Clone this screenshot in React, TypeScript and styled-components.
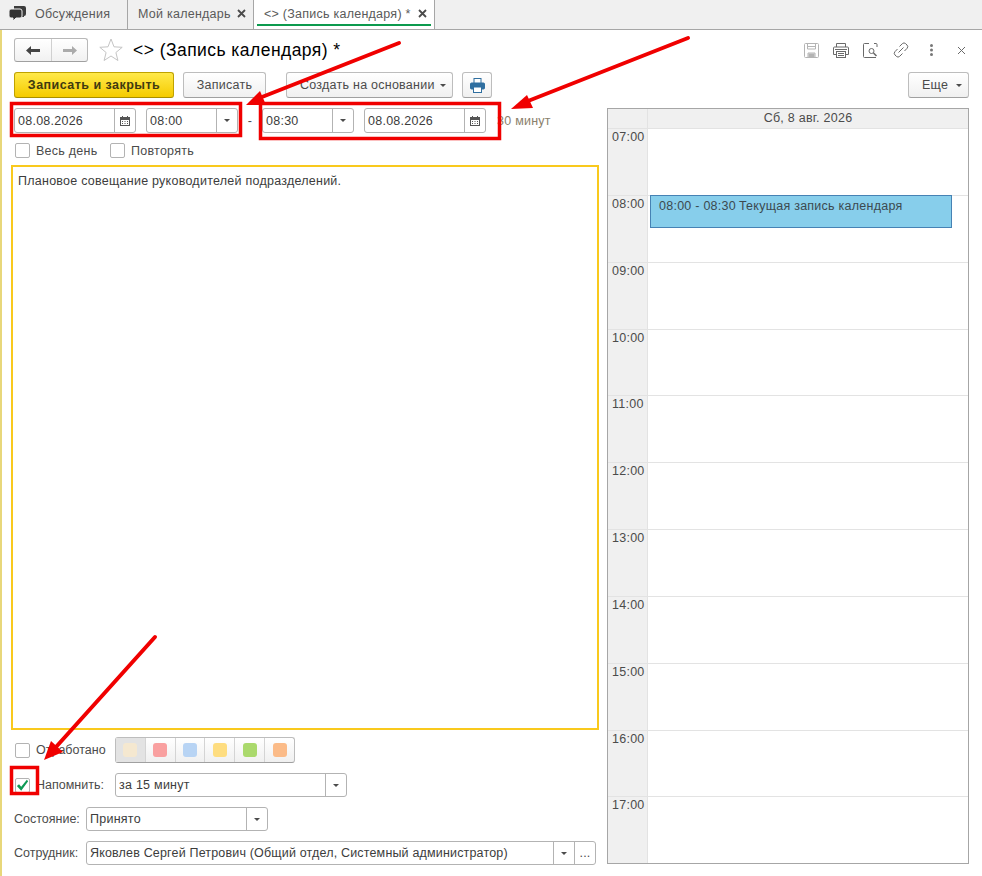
import React from 'react';
import styled, { createGlobalStyle, css } from 'styled-components';

const GlobalStyle = createGlobalStyle`
    html, body {
        margin: 0;
        padding: 0;
        background: #FFFFFF;
    }

    * {
        box-sizing: border-box;
    }
`

const Page = styled.div`
    position: relative;
    display: flex;
    flex-direction: column;
    width: 982px;
    height: 876px;
    overflow: hidden;
    font-family: "Liberation Sans", Arial, sans-serif;
    font-size: 12.5px;
    letter-spacing: 0.25px;
    color: #4B4B4B;
`

// Tabs
const TabBar = styled.nav`
    display: flex;
    flex: none;
    height: 30px;
    background-color: #F0F0F0;
    border-bottom: 1px solid #A6A6A6;
`

const Tab = styled.div<{ $width: number; $active?: boolean }>`
    position: relative;
    display: flex;
    align-items: center;
    flex: none;
    width: ${(p) => p.$width}px;
    height: 29px;
    padding: 0 0 2px 10px;
    border-right: 1px solid #A6A6A6;
    color: #5A5A5A;
    background-color: ${(p) => (p.$active ? '#FFFFFF' : 'transparent')};

    ${(p) => p.$active && css`
        &::after {
            content: '';
            position: absolute;
            left: 3px;
            right: 3px;
            bottom: 3px;
            height: 2px;
            background-color: #0C9A4E;
        }
    `}
`

const TabIcon = styled.svg`
    flex: none;
    margin: 0 9px 0 -1px;
`

const TabClose = styled.span`
    margin-left: auto;
    margin-right: 7px;
    display: flex;
`

// Form
const Form = styled.main`
    display: flex;
    flex-direction: column;
    flex: 1;
    min-height: 0;
    padding: 8px 13px 0 12px;
    border-left: 2px solid #E8D77A;
`

const HeaderRow = styled.header`
    display: flex;
    align-items: center;
    height: 24px;
`

const NavGroup = styled.div`
    display: flex;
    width: 74px;
    height: 24px;
    border: 1px solid #B8B8B8;
    border-bottom-color: #A0A0A0;
    border-radius: 3px;
    background: linear-gradient(#FFFFFF, #F1F1F1);
`

const NavButton = styled.div<{ $last?: boolean }>`
    display: flex;
    align-items: center;
    justify-content: center;
    width: 50%;
    border-left: ${(p) => (p.$last ? '1px solid #D0D0D0' : 'none')};
`

const FavoriteIcon = styled.svg`
    flex: none;
    margin-left: 11px;
`

const Title = styled.h1`
    margin: 0 0 0 10px;
    font-size: 17.5px;
    font-weight: 400;
    letter-spacing: 0.45px;
    color: #000000;
`

const HeaderIcons = styled.div`
    display: flex;
    align-items: center;
    margin-left: auto;
    gap: 14px;
`

const IconSlot = styled.span`
    display: flex;
    justify-content: center;
    width: 16px;
`

const Toolbar = styled.div`
    display: flex;
    align-items: center;
    height: 26px;
    margin-top: 10px;
`

const Button = styled.div<{ $width: number; $primary?: boolean; $gap?: number; $push?: boolean; $caret?: boolean }>`
    display: flex;
    align-items: center;
    justify-content: ${(p) => (p.$caret ? 'space-between' : 'center')};
    flex: none;
    width: ${(p) => p.$width}px;
    height: 26px;
    padding: ${(p) => (p.$caret ? '0 6px 0 13px' : '0')};
    margin-left: ${(p) => (p.$push ? 'auto' : `${p.$gap || 0}px`)};
    border: 1px solid ${(p) => (p.$primary ? '#BFA200' : '#BDBDBD')};
    border-bottom-color: ${(p) => (p.$primary ? '#A88F00' : '#A0A0A0')};
    border-radius: 3px;
    color: ${(p) => (p.$primary ? '#3F3A10' : '#4B4B4B')};
    font-weight: ${(p) => (p.$primary ? 700 : 400)};
    letter-spacing: ${(p) => (p.$primary ? '0.47px' : '0.25px')};
    background: ${(p) => (p.$primary ? 'linear-gradient(#FFE94A, #F5CB00)' : 'linear-gradient(#FFFFFF, #F0F0F0)')};
`

const Caret = styled.span`
    width: 0;
    height: 0;
    border-left: 3px solid transparent;
    border-right: 3px solid transparent;
    border-top: 3px solid #4B4B4B;
`

const Body = styled.div`
    display: flex;
    flex: 1;
    min-height: 0;
    margin-top: 10px;
`

const Left = styled.section`
    display: flex;
    flex-direction: column;
    flex: none;
    width: 585px;
`

const FieldRow = styled.div<{ $top?: number; $height?: number }>`
    display: flex;
    align-items: center;
    flex: none;
    height: ${(p) => p.$height || 24}px;
    margin-top: ${(p) => p.$top || 0}px;
`

const Field = styled.div<{ $width: number; $gap?: number }>`
    display: flex;
    flex: none;
    align-items: stretch;
    width: ${(p) => p.$width}px;
    height: 100%;
    margin-left: ${(p) => p.$gap || 0}px;
    border: 1px solid #B3B3B3;
    border-radius: 3px;
    background-color: #FFFFFF;
`

const FieldValue = styled.span<{ $lineHeight?: number; $tight?: boolean }>`
    flex: 1;
    min-width: 0;
    padding-left: 3px;
    line-height: ${(p) => p.$lineHeight || 22}px;
    letter-spacing: ${(p) => (p.$tight ? '0.17px' : '0.25px')};
    color: #3C3C3C;
    white-space: nowrap;
    overflow: hidden;
`

const FieldAddon = styled.span`
    display: flex;
    align-items: center;
    justify-content: center;
    flex: none;
    width: 21px;
    border-left: 1px solid #B3B3B3;
`

const Dash = styled.span`
    width: 24px;
    text-align: center;
`

const Duration = styled.span`
    margin-left: 11px;
    color: #8A806C;
`

const Box = styled.span`
    display: flex;
    align-items: center;
    justify-content: center;
    flex: none;
    width: 15px;
    height: 15px;
    margin-left: 1px;
    border: 1px solid #B3B3B3;
    border-radius: 2px;
    background-color: #FFFFFF;
`

const CheckLabel = styled.span<{ $width?: number; $tight?: boolean }>`
    flex: none;
    width: ${(p) => (p.$width ? `${p.$width}px` : 'auto')};
    margin-left: 6px;
    letter-spacing: ${(p) => (p.$tight ? '0' : '0.25px')};
`

const Label = styled.span<{ $width: number }>`
    flex: none;
    width: ${(p) => p.$width}px;
    letter-spacing: 0;
`

const Editor = styled.div`
    flex: none;
    width: 588px;
    height: 565px;
    margin: 7px 0 0 -3px;
    padding: 7px 5px;
    border: 2px solid #F9C91D;
    color: #3C3C3C;
`

const Swatches = styled.div`
    display: flex;
    flex: none;
    width: 180px;
    height: 26px;
    border: 1px solid #BDBDBD;
    border-bottom-color: #A0A0A0;
    border-radius: 3px;
    background: linear-gradient(#FFFFFF, #F0F0F0);
`

const SwatchCell = styled.span<{ $selected?: boolean }>`
    display: flex;
    align-items: center;
    justify-content: center;
    flex: 1;
    border-right: 1px solid #D4D4D4;
    background: ${(p) => (p.$selected ? '#E3E3E3' : 'transparent')};

    &:last-child {
        border-right: none;
    }
`

const Swatch = styled.span<{ $color: string }>`
    width: 14px;
    height: 14px;
    border-radius: 3px;
    background-color: ${(p) => p.$color};
`

// Calendar
const Calendar = styled.aside`
    flex: 1;
    display: flex;
    flex-direction: column;
    margin-left: 8px;
    height: 756px;
    border: 1px solid #A6A6A6;
`

const CalendarHead = styled.div`
    display: flex;
    flex: none;
    height: 20px;
    background-color: #F0F0F0;
    border-bottom: 1px solid #E3E3E3;
`

const HeadCorner = styled.span`
    flex: none;
    width: 40px;
    border-right: 1px solid #E3E3E3;
`

const HeadDate = styled.span`
    flex: 1;
    text-align: center;
    line-height: 18px;
`

const Hours = styled.div`
    flex: 1;
    display: grid;
    grid-auto-rows: 66.85px;
    overflow: hidden;
`

const HourRow = styled.div`
    display: flex;
    border-bottom: 1px solid #E3E3E3;
`

const HourLabel = styled.span`
    flex: none;
    width: 40px;
    padding: 1px 0 0 4px;
    line-height: 15px;
    background-color: #F0F0F0;
    border-right: 1px solid #E3E3E3;
`

const HourCell = styled.div`
    flex: 1;
    padding: 0 16px 0 2px;
    background-color: #FFFFFF;
`

const EventCard = styled.div`
    display: flex;
    height: 33px;
    margin-top: -1px;
    padding: 2px 8px;
    line-height: 16px;
    background-color: #87CEEB;
    border: 1px solid #4682B4;
    color: #3C4A50;
    gap: 3px;
`

const Annotations = styled.svg`
    position: absolute;
    top: 0;
    left: 0;
    pointer-events: none;
`

const CloseIcon = () => (
    <svg width="9" height="9" viewBox="0 0 9 9"><path d="M1 1l7 7M8 1L1 8" stroke="#4B4B4B" strokeWidth="1.8" /></svg>
)

const CalendarIcon = () => (
    <svg width="10" height="10" viewBox="0 0 10 10" fill="none">
        <rect x="0.5" y="1.5" width="9" height="8" fill="#FFFFFF" stroke="#555555" />
        <rect x="0.5" y="1.5" width="9" height="2" fill="#555555" stroke="#555555" />
        <path d="M2.5 0v2M7.5 0v2" stroke="#555555" />
        <path d="M2 5.5h1M4.5 5.5h1M7 5.5h1M2 7.5h1M4.5 7.5h1M7 7.5h1" stroke="#555555" />
    </svg>
)

const PrintIcon = () => (
    <svg width="15" height="15" viewBox="0 0 15 15" fill="none">
        <rect x="4" y="0.5" width="7" height="5" fill="#FFFFFF" stroke="#2F6FA0" />
        <rect x="0.5" y="5" width="14" height="6" rx="1" fill="#2F6FA0" stroke="#2F6FA0" />
        <rect x="3.5" y="9" width="8" height="5.500" fill="#FFFFFF" stroke="#2F6FA0" />
    </svg>
)

const tabs = [
    { text: 'Мой календарь', width: 126 },
    { text: '<> (Запись календаря) *', width: 181, active: true },
]

const hours = ['07:00', '08:00', '09:00', '10:00', '11:00', '12:00', '13:00', '14:00', '15:00', '16:00', '17:00']
const swatches = ['#F5E8D0', '#F9A0A0', '#B8D4F4', '#FEDD80', '#AAD96C', '#FBBB88']

const Select = (props: any) => {
    const { value, width, gap, dots, lineHeight } = props;
    return (
        <Field $width={width} $gap={gap}>
            <FieldValue $lineHeight={lineHeight} $tight={dots}>{value}</FieldValue>
            <FieldAddon><Caret /></FieldAddon>
            { dots && <FieldAddon>...</FieldAddon> }
        </Field>
    )
}

const DateField = (props: any) => {
    const { value, gap } = props;
    return (
        <Field $width={122} $gap={gap}>
            <FieldValue $lineHeight={24}>{value}</FieldValue>
            <FieldAddon><CalendarIcon /></FieldAddon>
        </Field>
    )
}

const App = () => {
    return (
        <Page>
            <GlobalStyle />
            <TabBar>
                <Tab $width={128}>
                    <TabIcon width="17" height="16" viewBox="0 0 17 16">
                        <path d="M5 0h10a2 2 0 012 2v6a2 2 0 01-2 2v1H5z" fill="#3C3C3C" />
                        <path d="M2 3h9a2 2 0 012 2v5a2 2 0 01-2 2H7l-3 3v-3H2a2 2 0 01-2-2V5a2 2 0 012-2z" fill="#333333" stroke="#F0F0F0" />
                    </TabIcon>
                    Обсуждения
                </Tab>
                { tabs.map((tab) => (
                    <Tab key={tab.text} $width={tab.width} $active={tab.active}>
                        {tab.text}
                        <TabClose><CloseIcon /></TabClose>
                    </Tab>
                ))}
            </TabBar>
            <Form>
                <HeaderRow>
                    <NavGroup>
                        <NavButton>
                            <svg width="14" height="9" viewBox="0 0 14 9"><path d="M0 4.500L5 0v3h9v3H5v3z" fill="#444444" /></svg>
                        </NavButton>
                        <NavButton $last>
                            <svg width="14" height="9" viewBox="0 0 14 9"><path d="M14 4.500L9 0v3H0v3h9v3z" fill="#ABABAB" /></svg>
                        </NavButton>
                    </NavGroup>
                    <FavoriteIcon width="24" height="24" viewBox="0 0 24 24">
                        <path d="M12 1l3 7.8 8.2.5-6.3 5.2 2 8L12 18l-6.9 4.5 2-8L.8 9.3 9 8.800z" fill="#FFFFFF" stroke="#C4C4C4" />
                    </FavoriteIcon>
                    <Title>{'<> (Запись календаря) *'}</Title>
                    <HeaderIcons>
                        <IconSlot>
                            <svg width="15" height="15" viewBox="0 0 15 15" fill="none" stroke="#B4B4B4">
                                <rect x="0.5" y="0.500" width="14" height="14" rx="1" />
                                <path d="M3.500 1v5h8V1M3.500 3.500h8M4 14v-4h7v4" />
                                <rect x="5" y="11" width="5" height="3" fill="#B4B4B4" />
                            </svg>
                        </IconSlot>
                        <IconSlot>
                            <svg width="16" height="15" viewBox="0 0 16 15" fill="none" stroke="#6A6A6A">
                                <path d="M3.500 4V.500h9V4M3 11.500H.500V5a1 1 0 011-1h13a1 1 0 011 1v6.500H13" />
                                <rect x="3.500" y="8.500" width="9" height="6" />
                                <path d="M5 10.500h6M5 12.500h6M2 6.500h12" />
                            </svg>
                        </IconSlot>
                        <IconSlot>
                            <svg width="16" height="15" viewBox="0 0 16 15" fill="none" stroke="#6A6A6A">
                                <path d="M6 .500H1.500a1 1 0 00-1 1v12a1 1 0 001 1H13M11 .500h2a1 1 0 011 1V4" />
                                <circle cx="8.500" cy="8" r="2.500" />
                                <path d="M10.500 10l3 3" strokeWidth="1.600" />
                            </svg>
                        </IconSlot>
                        <IconSlot>
                            <svg width="16" height="16" viewBox="0 0 16 16" fill="none" stroke="#6A6A6A">
                                <path d="M6.500 4.500l2.800-2.800a2.400 2.400 0 013.400 0l1.300 1.300a2.400 2.400 0 010 3.400L11.500 9" />
                                <path d="M9.500 11.500l-2.800 2.800a2.400 2.400 0 01-3.400 0L2 13a2.400 2.400 0 010-3.400L4.500 7" />
                                <path d="M5.500 10.500l5-5" />
                            </svg>
                        </IconSlot>
                        <IconSlot>
                            <svg width="3" height="12" viewBox="0 0 3 12" fill="#777777">
                                <circle cx="1.500" cy="1.500" r="1.500" />
                                <circle cx="1.500" cy="6" r="1.500" />
                                <circle cx="1.500" cy="10.500" r="1.500" />
                            </svg>
                        </IconSlot>
                        <IconSlot>
                            <svg width="9" height="9" viewBox="0 0 9 9"><path d="M1 1l7 7M8 1L1 8" stroke="#6A6A6A" /></svg>
                        </IconSlot>
                    </HeaderIcons>
                </HeaderRow>
                <Toolbar>
                    <Button $width={160} $primary>Записать и закрыть</Button>
                    <Button $width={83} $gap={9}>Записать</Button>
                    <Button $width={167} $gap={20} $caret>Создать на основании <Caret /></Button>
                    <Button $width={30} $gap={9}><PrintIcon /></Button>
                    <Button $width={61} $push $caret>Еще <Caret /></Button>
                </Toolbar>
                <Body>
                    <Left>
                        <FieldRow $height={25}>
                            <DateField value="08.08.2026" />
                            <Select value="08:00" width={92} gap={10} lineHeight={24} />
                            <Dash>-</Dash>
                            <Select value="08:30" width={92} lineHeight={24} />
                            <DateField value="08.08.2026" gap={10} />
                            <Duration>30 минут</Duration>
                        </FieldRow>
                        <FieldRow $top={10} $height={15}>
                            <Box />
                            <CheckLabel $width={73}>Весь день</CheckLabel>
                            <Box />
                            <CheckLabel>Повторять</CheckLabel>
                        </FieldRow>
                        <Editor>Плановое совещание руководителей подразделений.</Editor>
                        <FieldRow $top={7} $height={26}>
                            <Box />
                            <CheckLabel $width={79} $tight>Отработано</CheckLabel>
                            <Swatches>
                                { swatches.map((color, index) => (
                                    <SwatchCell key={color} $selected={index === 0}><Swatch $color={color} /></SwatchCell>
                                ))}
                            </Swatches>
                        </FieldRow>
                        <FieldRow $top={10}>
                            <Box>
                                <svg width="15" height="13" viewBox="0 0 15 13"><path d="M1 7l2.500-2 2.500 3L12.500 0 14 1.500 6 12.500z" fill="#0E9A55" /></svg>
                            </Box>
                            <CheckLabel $width={79} $tight>Напомнить:</CheckLabel>
                            <Select value="за 15 минут" width={232} />
                        </FieldRow>
                        <FieldRow $top={10}>
                            <Label $width={72}>Состояние:</Label>
                            <Select value="Принято" width={182} />
                        </FieldRow>
                        <FieldRow $top={10}>
                            <Label $width={72}>Сотрудник:</Label>
                            <Select value="Яковлев Сергей Петрович (Общий отдел, Системный администратор)" width={510} dots />
                        </FieldRow>
                    </Left>
                    <Calendar>
                        <CalendarHead>
                            <HeadCorner />
                            <HeadDate>Сб, 8 авг. 2026</HeadDate>
                        </CalendarHead>
                        <Hours>
                            { hours.map((hour) => (
                                <HourRow key={hour}>
                                    <HourLabel>{hour}</HourLabel>
                                    <HourCell>
                                        { hour === '08:00' && (
                                            <EventCard>
                                                <span>08:00 - 08:30</span>
                                                <span>Текущая запись календаря</span>
                                            </EventCard>
                                        )}
                                    </HourCell>
                                </HourRow>
                            ))}
                        </Hours>
                    </Calendar>
                </Body>
            </Form>
            <Annotations width="982" height="876" viewBox="0 0 982 876" fill="none">
                <rect x="11.500" y="103.500" width="229" height="32" stroke="#F00000" strokeWidth="3.500" />
                <rect x="260.500" y="103.500" width="239" height="35" stroke="#F00000" strokeWidth="3.500" />
                <rect x="11.500" y="767.500" width="26" height="26" stroke="#F00000" strokeWidth="3.500" />
                <path d="M399 43L262 97" stroke="#F00000" strokeWidth="4" strokeLinecap="round" />
                <path d="M246 105l14-14 6 14z" fill="#F00000" />
                <path d="M688 38L528 101" stroke="#F00000" strokeWidth="4" strokeLinecap="round" />
                <path d="M511 109l16-14 6 13z" fill="#F00000" />
                <path d="M155 637L56 747" stroke="#F00000" strokeWidth="4" strokeLinecap="round" />
                <path d="M44 760l7-19 12 11z" fill="#F00000" />
            </Annotations>
        </Page>
    )
}

export default App;
